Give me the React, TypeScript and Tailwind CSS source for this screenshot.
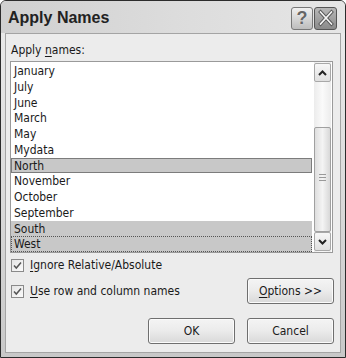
import React from "react";

const FONT = { fontFamily: '"DejaVu Sans Condensed", "DejaVu Sans", "Liberation Sans", sans-serif' };

const items = [
  "January", "July", "June", "March", "May", "Mydata", "North",
  "November", "October", "September", "South", "West",
];

function Row({ label }: { label: string }) {
  let cls = "h-[15.75px] leading-[15px] pl-[2px] text-[#1a1a1a] border border-transparent";
  if (label === "North") cls = "h-[15.75px] leading-[15px] pl-[2px] text-[#1a1a1a] bg-[#c8c8c8] border border-[#7c7c7c]";
  if (label === "South") cls = "h-[15.75px] leading-[15px] pl-[2px] text-[#1a1a1a] bg-[#c8c8c8] border border-[#c8c8c8]";
  if (label === "West") cls = "h-[15.75px] leading-[15px] pl-[2px] text-[#1a1a1a] bg-[#c8c8c8] border border-dotted border-[#555]";
  return <div className={cls}>{label}</div>;
}

function Check() {
  return (
    <div className="w-[13px] h-[13px] border border-[#8a8a8a] bg-gradient-to-br from-[#e4e4e4] to-[#fbfbfb] flex items-center justify-center shrink-0">
      <svg width="11" height="11" viewBox="0 0 11 11">
        <path d="M2 5.5 L4.3 8 L9 2.5" fill="none" stroke="#555" strokeWidth="1.5" />
      </svg>
    </div>
  );
}

function Btn({ children }: { children: React.ReactNode }) {
  return (
    <div className="w-[87px] h-[26px] rounded-[3px] border border-[#6f6f6f] bg-gradient-to-b from-[#f4f4f4] via-[#ebebeb] to-[#d9d9d9] shadow-[inset_0_0_0_1px_#fbfbfb] flex items-center justify-center text-[12px] text-[#1a1a1a]">
      {children}
    </div>
  );
}

export default function App() {
  return (
    <div className="w-[346px] h-[358px] bg-white" style={FONT}>
      <div className="w-full h-full rounded-t-[6px] border border-[#2c2c2c] bg-gradient-to-b from-[#ececec] via-[#dcdcdc] to-[#c8c8c8] flex flex-col">
        {/* Title bar */}
        <div className="h-[32px] shrink-0 flex items-center justify-between pl-[7px] pr-[8px] bg-gradient-to-r from-[#d0d0d0] via-[#dcdcdc] to-[#e6e6e6] rounded-t-[5px]">
          <div className="text-[16px] font-bold text-[#222] mt-[1px]" style={{ fontFamily: '"Liberation Sans", Arial, sans-serif' }}>
            Apply Names
          </div>
          <div className="flex items-center gap-[1px] mt-[2px]">
            <div className="w-[22px] h-[23px] rounded-[3px] border border-[#777] bg-gradient-to-b from-[#f0f0f0] to-[#bdbdbd] flex items-center justify-center">
              <span className="text-[18px] font-bold text-[#666] leading-none [text-shadow:0_0_1px_#fff]" style={{ fontFamily: '"Liberation Sans", Arial, sans-serif' }}>?</span>
            </div>
            <div className="w-[23px] h-[23px] rounded-[3px] border border-[#555] bg-gradient-to-b from-[#b8b8b8] to-[#8a8a8a] flex items-center justify-center">
              <svg width="18" height="18" viewBox="0 0 18 18">
                <path d="M3.5 3 L14.5 15 M14.5 3 L3.5 15" stroke="#555" strokeWidth="3.4" strokeLinecap="square" />
                <path d="M3.5 3 L14.5 15 M14.5 3 L3.5 15" stroke="#f4f4f4" strokeWidth="1.6" strokeLinecap="square" />
              </svg>
            </div>
          </div>
        </div>
        {/* Body */}
        <div className="flex-1 mx-[4px] mb-[4px] border border-[#a4a4a4] bg-[#ececec] flex flex-col text-[12px] text-[#1a1a1a]">
          <div className="pl-[5px] pt-[9px] leading-[15px]">
            Apply <span className="underline underline-offset-2">n</span>ames:
          </div>
          {/* Listbox */}
          <div className="ml-[4px] mt-[3px] w-[323px] h-[192px] border border-[#9a9a9a] bg-white flex">
            <div className="flex-1 flex flex-col pt-px pr-[2px]">
              {items.map((it) => (
                <Row key={it} label={it} />
              ))}
            </div>
            <div className="w-[17px] mr-px py-px flex flex-col bg-gradient-to-r from-[#ececec] via-[#fafafa] to-[#ececec]">
              <div className="h-[19px] border border-[#a8a8a8] rounded-[2px] bg-gradient-to-b from-[#f7f7f7] to-[#e0e0e0] flex items-center justify-center">
                <svg width="9" height="6" viewBox="0 0 9 6">
                  <path d="M1 5 L4.5 1.5 L8 5" fill="none" stroke="#222" strokeWidth="2" />
                </svg>
              </div>
              <div className="h-[45px]" />
              <div className="flex-1 border border-[#a0a0a0] rounded-[2px] bg-gradient-to-r from-[#dedede] via-[#f4f4f4] to-[#d8d8d8] flex items-center justify-center">
                <div className="flex flex-col gap-[2px] mt-[-4px]">
                  <div className="w-[7px] h-px bg-[#999]" />
                  <div className="w-[7px] h-px bg-[#999]" />
                  <div className="w-[7px] h-px bg-[#999]" />
                </div>
              </div>
              <div className="h-[19px] border border-[#a8a8a8] rounded-[2px] bg-gradient-to-b from-[#f7f7f7] to-[#e0e0e0] flex items-center justify-center">
                <svg width="9" height="6" viewBox="0 0 9 6">
                  <path d="M1 1 L4.5 4.5 L8 1" fill="none" stroke="#222" strokeWidth="2" />
                </svg>
              </div>
            </div>
          </div>
          {/* Checkbox 1 */}
          <div className="mt-[5px] ml-[5px] h-[15px] flex items-center">
            <Check />
            <span className="ml-[6px] leading-[15px]">
              <span className="underline underline-offset-2">I</span>gnore Relative/Absolute
            </span>
          </div>
          {/* Checkbox 2 + Options */}
          <div className="mt-[5px] ml-[5px] mr-[6px] h-[26px] flex items-center justify-between">
            <div className="flex items-center">
              <Check />
              <span className="ml-[6px] leading-[15px]">
                <span className="underline underline-offset-2">U</span>se row and column names
              </span>
            </div>
            <Btn>
              <span>
                <span className="underline underline-offset-2">O</span>ptions &gt;&gt;
              </span>
            </Btn>
          </div>
          {/* OK / Cancel */}
          <div className="mt-[14px] mr-[6px] flex justify-end gap-[12px]">
            <Btn>OK</Btn>
            <Btn>Cancel</Btn>
          </div>
        </div>
      </div>
    </div>
  );
}
